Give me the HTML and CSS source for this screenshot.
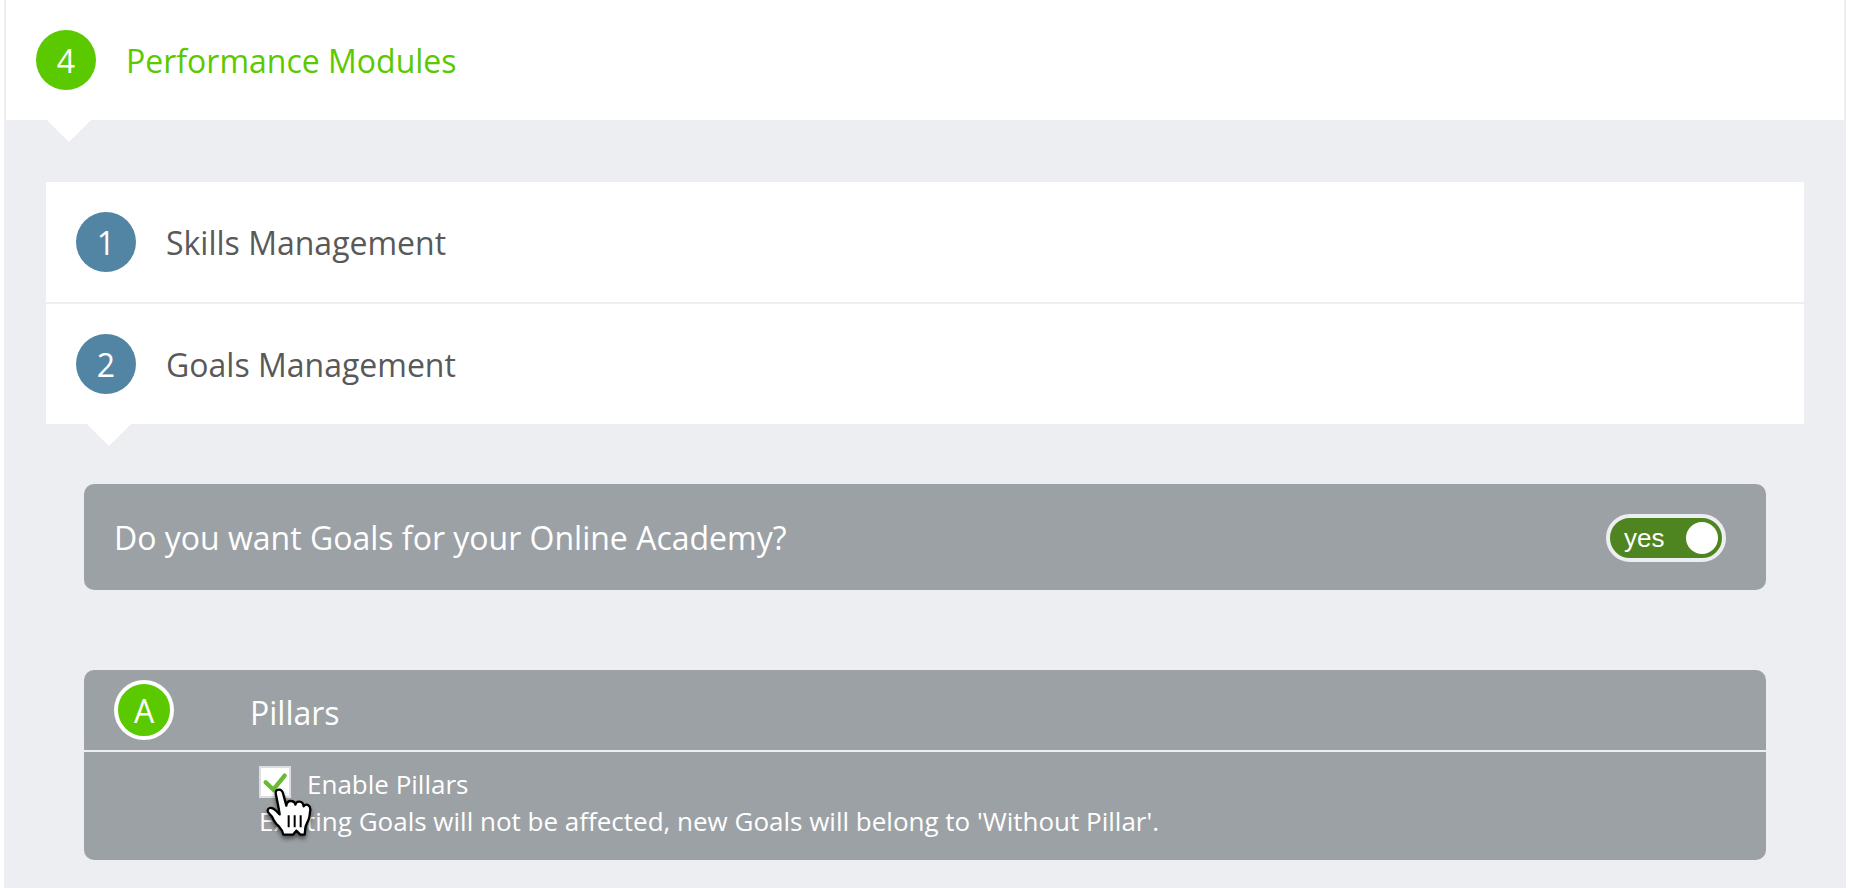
FILE: index.html
```html
<!DOCTYPE html>
<html lang="en">
<head>
  <meta charset="UTF-8">
  <meta name="viewport" content="width=device-width, initial-scale=1.0">
  <title>Performance Modules</title>
  <link rel="stylesheet" href="styles.css">
</head>
<body>
  <main class="setup">
    <div class="step step-active">
      <span class="step-number">4</span>
      <h1 class="step-title">Performance Modules</h1>
    </div>
    <div class="step-content">
      <div class="modules">
        <div class="step">
          <span class="step-number">1</span>
          <h2 class="step-title">Skills Management</h2>
        </div>
        <div class="step step-open">
          <span class="step-number">2</span>
          <h2 class="step-title">Goals Management</h2>
        </div>
      </div>
      <div class="module-content">
        <section class="panel question">
          <label class="question-text" for="goals-enabled">Do you want Goals for your Online Academy?</label>
          <div class="toggle">
            <input type="checkbox" id="goals-enabled" class="toggle-input" checked>
            <span class="toggle-text">yes</span>
            <span class="toggle-knob"></span>
          </div>
        </section>
        <section class="panel">
          <div class="panel-header">
            <span class="step-number step-letter">A</span>
            <h3 class="panel-title">Pillars</h3>
          </div>
          <div class="panel-body">
            <div class="option">
              <div class="checkbox">
                <input type="checkbox" id="enable-pillars" class="checkbox-input" checked>
                <svg class="checkbox-tick" viewBox="0 0 96 96" aria-hidden="true">
                  <path d="M20 49 L43 71 L77 29" />
                </svg>
                <svg class="pointer" viewBox="0 0 150 162" aria-hidden="true">
                  <path d="M33 24 C30 12 34 8 42 8 C50 8 53 13 55 22 L64 56 C65 45 70 42 77 42 C86 42 90 46 91 53 C93 45 98 43 104 44 C112 45 115 50 116 58 C120 53 126 52 130 55 C137 59 137 66 135 75 C134 84 134 92 130 100 C126 109 121 115 121 125 L119 143 L106 143 L94 131 L84 143 L55 143 C53 131 49 126 43 120 C35 113 30 108 26 99 C22 89 18 84 12 79 C6 73 7 65 14 63 C21 61 28 66 34 72 L44 82 C42 65 37 44 33 24 Z" />
                  <path class="pointer-lines" d="M71 85 V121 M89 85 V121 M107 85 V121" />
                </svg>
              </div>
              <label for="enable-pillars">Enable Pillars</label>
            </div>
            <p class="option-note">Existing Goals will not be affected, new Goals will belong to 'Without Pillar'.</p>
          </div>
        </section>
      </div>
    </div>
  </main>
</body>
</html>
```
FILE: styles.css
```css
:root {
  --page-grey: #edeef2;
  --panel-grey: #9ca1a5;
  --green: #5bc900;
  --green-dark: #4f8520;
  --blue: #5285a3;
  --text: #595959;
}
* {
  box-sizing: border-box;
}
body {
  margin: 0;
  background: #fff;
  color: var(--text);
  font-family: 'Open Sans', 'Noto Sans', sans-serif;
  font-size: 26px;
}
h1, h2, h3, p {
  margin: 0;
  font-weight: 400;
}
.setup {
  display: flex;
  flex-direction: column;
  min-height: 100vh;
  margin: 0 8px 0 4px;
  border: solid var(--page-grey);
  border-width: 0 2px;
}
.step {
  position: relative;
  display: flex;
  align-items: center;
  gap: 30px;
  padding: 30px;
  background: #fff;
}
.step-number {
  display: flex;
  align-items: center;
  justify-content: center;
  flex: none;
  width: 60px;
  height: 60px;
  padding-top: 2px;
  border-radius: 50%;
  background: var(--blue);
  color: #fff;
  font-size: 32px;
  font-weight: 500;
  line-height: 44px;
}
.step-title,
.panel-title,
.question-text {
  font-size: 32px;
  line-height: 44px;
}
.step-title {
  padding-top: 2px;
}
.step-active .step-number,
.step-letter {
  background: var(--green);
}
.step-active .step-title {
  color: var(--green);
}
/* arrow under the opened step */
.step-active::after,
.step-open::after {
  content: '';
  position: absolute;
  top: 100%;
  left: 41px;
  border: solid transparent;
  border-width: 22px 22px 0;
  border-top-color: #fff;
}
.step-content {
  flex: 1;
  padding: 62px 40px 28px;
  background: var(--page-grey);
}
.modules {
  display: flex;
  flex-direction: column;
  gap: 2px;
}
.module-content {
  display: flex;
  flex-direction: column;
  gap: 80px;
  padding: 60px 38px 0;
}
.panel {
  border-radius: 10px;
  background: var(--panel-grey);
  color: #fff;
}
.question {
  display: flex;
  align-items: center;
  justify-content: space-between;
  padding: 30px 40px 28px 30px;
}
.toggle {
  position: relative;
  display: flex;
  align-items: center;
  justify-content: space-between;
  width: 120px;
  height: 48px;
  padding: 0 4px 0 14px;
  border: 4px solid var(--page-grey);
  border-radius: 24px;
  background: var(--green-dark);
}
.toggle-input {
  position: absolute;
  inset: 0;
  width: 100%;
  height: 100%;
  margin: 0;
  opacity: 0;
  cursor: pointer;
}
.toggle-text {
  font-family: 'Liberation Sans', Arial, sans-serif;
  font-size: 26px;
  line-height: 40px;
}
.toggle-knob {
  width: 32px;
  height: 32px;
  border-radius: 50%;
  background: #fff;
}
.panel-header {
  display: flex;
  align-items: center;
  gap: 76px;
  padding: 10px 30px;
  border-bottom: 2px solid var(--page-grey);
}
.step-letter {
  border: 4px solid #fff;
}
.panel-title {
  padding-top: 6px;
}
.panel-body {
  padding: 14px 30px 20px 175px;
}
.option {
  display: flex;
  gap: 16px;
  height: 36px;
  line-height: 36px;
}
.checkbox {
  position: relative;
  width: 32px;
  height: 32px;
}
.checkbox-input {
  display: block;
  width: 32px;
  height: 32px;
  margin: 0;
  appearance: none;
  border: 2px solid #dcdee3;
  background: #fff;
}
.checkbox-tick {
  position: absolute;
  inset: 0;
  fill: none;
  stroke: #6cb935;
  stroke-width: 13;
  stroke-linecap: round;
  pointer-events: none;
}
.checkbox-input:not(:checked) + .checkbox-tick {
  display: none;
}
.pointer {
  position: absolute;
  top: 21px;
  left: 6px;
  width: 50px;
  height: 54px;
  fill: #fff;
  stroke: #000;
  stroke-width: 7;
  stroke-linejoin: round;
  filter: drop-shadow(0 3px 2px rgba(0, 0, 0, 0.5));
  pointer-events: none;
}
.pointer-lines {
  stroke-width: 6;
}
.option-note {
  line-height: 38px;
}
```
